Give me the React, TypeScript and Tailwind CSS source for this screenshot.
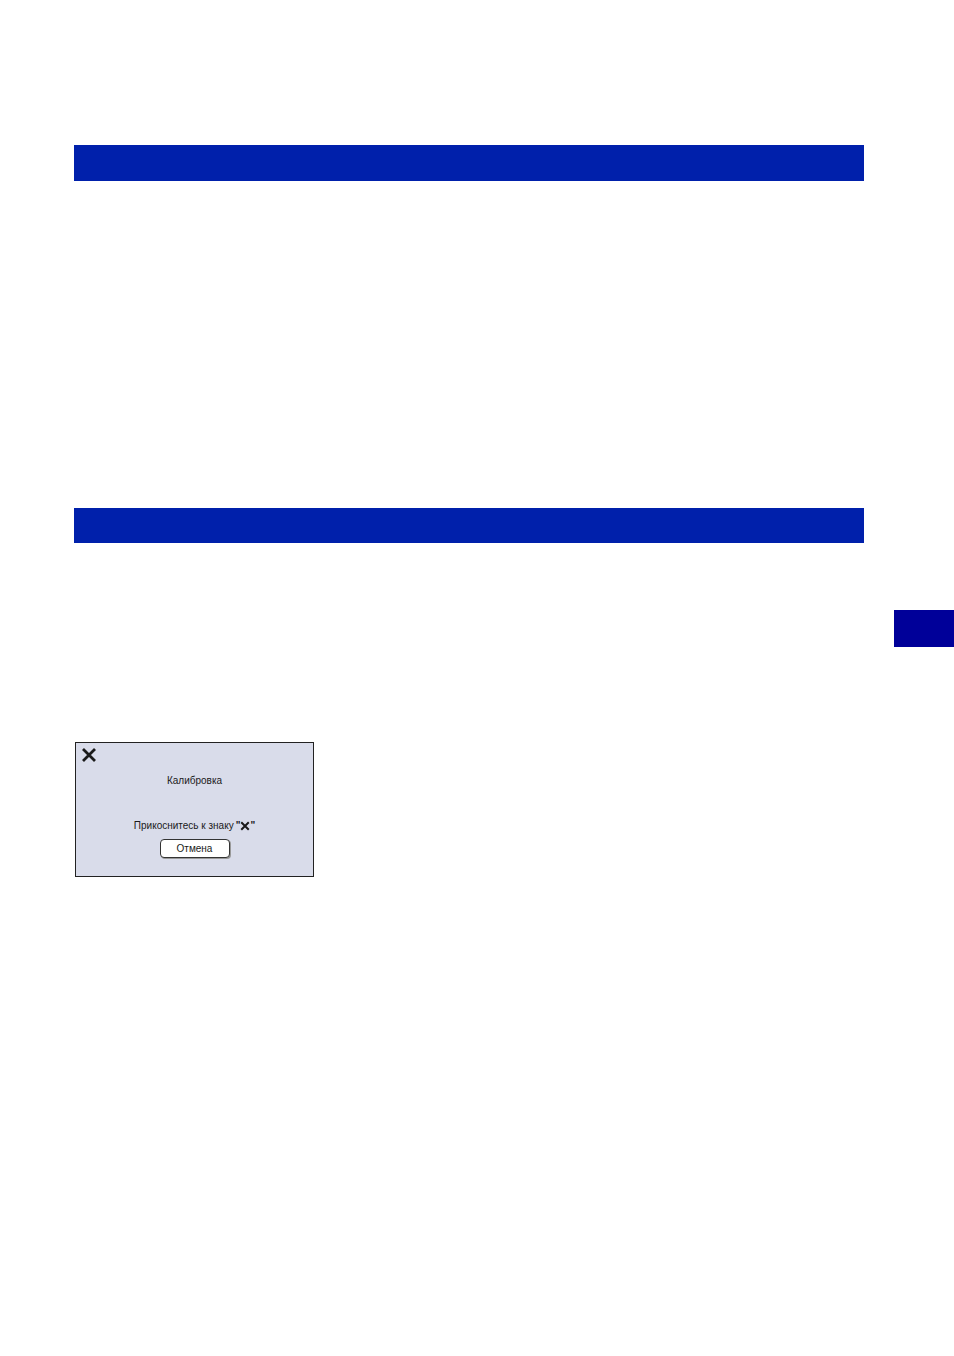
const CrossMark = ({ size, stroke }: { size: number; stroke: number }) => (
  <svg width={size} height={size} viewBox="0 0 16 16" className="inline-block">
    <path d="M2 2 L14 14 M14 2 L2 14" stroke="#1a1a1a" strokeWidth={stroke} fill="none" />
  </svg>
);

const SectionBar = ({ h }: { h: string }) => <div className={`w-[790px] bg-[#0020ab] ${h}`} />;

const CalibrationScreen = () => (
  <div className="w-[239px] h-[135px] border border-[#222] bg-[#d9dcea] flex flex-col font-['Liberation_Sans',Arial,sans-serif] text-[10px] leading-[12px] text-[#1a1a1a]">
    <div className="pt-[4px] pl-[5px] h-[20px]">
      <CrossMark size={16} stroke={2.8} />
    </div>
    <div className="mt-[12px] text-center">Калибровка</div>
    <div className="mt-[33px] flex items-center justify-center">
      <span>Прикоснитесь к знаку</span>
      <span className="ml-[2px] font-bold">"</span>
      <CrossMark size={10} stroke={3.2} />
      <span className="font-bold">"</span>
    </div>
    <div className="mt-[7px] flex justify-center">
      <button className="w-[70px] h-[19px] rounded-[4px] border border-[#333] bg-white text-[10px] leading-[12px] text-[#1a1a1a] shadow-[1px_1px_0_#999]">
        Отмена
      </button>
    </div>
  </div>
);

export default function App() {
  return (
    <div className="w-[954px] h-[1356px] bg-white overflow-hidden">
      <div className="pt-[145px] pl-[74px]">
        <SectionBar h="h-[36px]" />
      </div>
      <div className="pt-[327px] pl-[74px]">
        <SectionBar h="h-[35px]" />
      </div>
      <div className="pt-[67px] flex justify-end">
        <div className="w-[60px] h-[37px] bg-[#000099]" />
      </div>
      <div className="pt-[95px] pl-[75px]">
        <CalibrationScreen />
      </div>
    </div>
  );
}
